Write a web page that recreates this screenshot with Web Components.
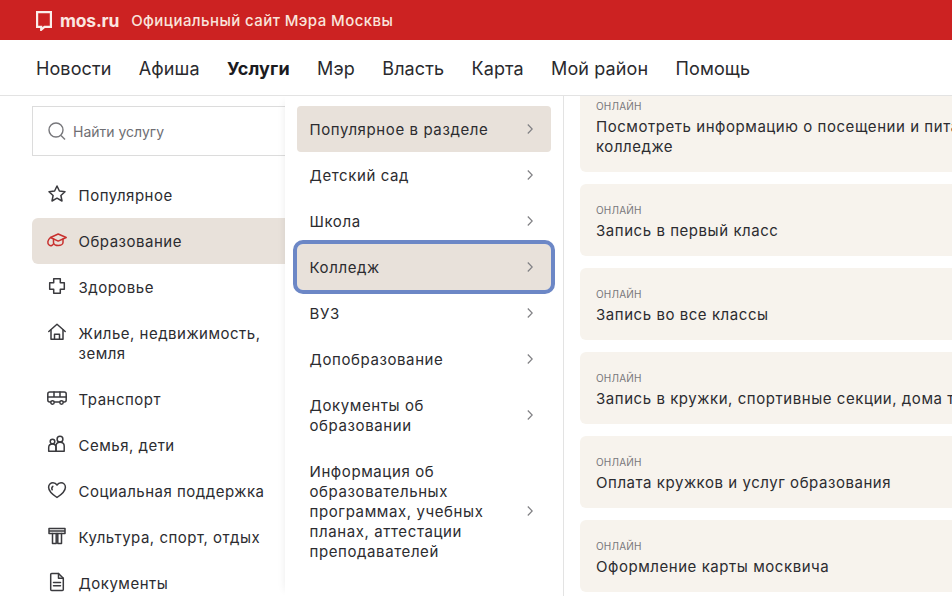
<!DOCTYPE html>
<html lang="ru">
<head>
<meta charset="utf-8">
<title>mos.ru</title>
<style>
  html, body { margin: 0; height: 596px; overflow: hidden; background: #fff; }
  body { font-family: "Inter", "Liberation Sans", sans-serif; color: #26262a; }
  .page { display: flex; height: 500px; overflow: hidden; }
</style>
</head>
<body>
<mos-header></mos-header>
<mos-nav></mos-nav>
<div class="page">
  <side-menu>
    <side-item icon="star">Популярное</side-item>
    <side-item icon="cap" active>Образование</side-item>
    <side-item icon="cross">Здоровье</side-item>
    <side-item icon="home">Жилье, недвижимость, земля</side-item>
    <side-item icon="bus">Транспорт</side-item>
    <side-item icon="family">Семья, дети</side-item>
    <side-item icon="heart">Социальная поддержка</side-item>
    <side-item icon="column">Культура, спорт, отдых</side-item>
    <side-item icon="doc">Документы</side-item>
  </side-menu>
  <sub-menu>
    <sub-item active>Популярное в разделе</sub-item>
    <sub-item>Детский сад</sub-item>
    <sub-item>Школа</sub-item>
    <sub-item active focused>Колледж</sub-item>
    <sub-item>ВУЗ</sub-item>
    <sub-item>Допобразование</sub-item>
    <sub-item>Документы об образовании</sub-item>
    <sub-item>Информация об образовательных программах, учебных планах, аттестации преподавателей</sub-item>
  </sub-menu>
  <service-list>
    <service-card>Посмотреть информацию о посещении и питании в колледже</service-card>
    <service-card>Запись в первый класс</service-card>
    <service-card>Запись во все классы</service-card>
    <service-card>Запись в кружки, спортивные секции, дома творчества</service-card>
    <service-card>Оплата кружков и услуг образования</service-card>
    <service-card>Оформление карты москвича</service-card>
  </service-list>
</div>
<script>
// all icons sit in a 20x20 box
const ICONS = {
  star: '<path d="M10 2l2.400 5 5.600.7-4.100 3.800 1.100 5.500-5-2.800-5 2.800 1.100-5.500L2 7.700 7.600 7z"/>',
  cap: '<path d="M3.500 7.500L11.200 4l8 3.500-8 3.600z"/><path d="M6.500 9v3.600c0 1.700 2.300 3 4.800 3s4.700-1.300 4.700-3V9"/><path d="M3.500 7.500C.6 9.800-.2 13.600 2.300 15.200c1.700 1 3.500.2 4.200-1.400"/>',
  cross: '<path d="M6.700 2.700h6.600v4h4v6.600h-4v4H6.700v-4h-4V6.700h4z"/>',
  home: '<path d="M1.800 9.500L10 2.300l8.200 7.200"/><path d="M4 8v9.300h12V8"/><path d="M7.500 17.300v-5h5v5"/>',
  bus: '<rect x=".8" y="4" width="18.400" height="10" rx="2"/><path d="M.8 9h18.400M7 4v5M13 4v5"/><circle cx="5.500" cy="14.500" r="1.700" fill="#fff"/><circle cx="14.500" cy="14.500" r="1.700" fill="#fff"/>',
  family: '<circle cx="5.500" cy="7.500" r="2.300"/><circle cx="13" cy="5.200" r="2.900"/><path d="M1.700 17.200v-3.700c0-2 1.600-3.500 3.800-3.500s3.500 1.500 3.500 3.500v3.700z"/><path d="M9 17.200V12c0-2.300 1.700-3.800 4-3.800s4.200 1.500 4.200 3.800v5.200z"/>',
  heart: '<path d="M10 17.500C5.500 14.500 1.600 11.500 1.600 7.200 1.600 4.600 3.600 2.800 6 2.800c1.700 0 3.100.8 4 2.200.9-1.400 2.300-2.200 4-2.200 2.400 0 4.400 1.800 4.400 4.400 0 4.300-3.900 7.300-8.400 10.300z"/><path d="M5.200 9.800c-.7-1.400-.4-2.700.6-3.500"/>',
  column: '<path d="M2 2.500h16M2 2.500v5h16v-5M2 5h16"/><path d="M5.500 7.500v10h3.700v-10M10.800 7.500v10h3.700v-10"/>',
  doc: '<path d="M3.700 2.500a1 1 0 0 1 1-1h6.800l4.800 4.800V17.500a1 1 0 0 1-1 1H4.700a1 1 0 0 1-1-1z"/><path d="M11.500 1.500v4.800h4.800M6.500 10.500h7M6.500 13.800h7"/>'
};

class MosHeader extends HTMLElement {
  constructor() {
    super();
    this.attachShadow({ mode: 'open' }).innerHTML = `
      <style>
        :host { display: flex; align-items: center; height: 40px; padding-left: 36px; background: #cc2222; color: #fbeeea; }
        svg { width: 16px; height: 20px; margin: 2px 8px 0 0; fill: none; stroke: #fbeeea; stroke-width: 2.200; }
        .logo { font-weight: 700; font-size: 17.500px; letter-spacing: -.2px; color: #fbe6e0; margin-right: 12px; }
        .title { font-weight: 500; font-size: 15px; letter-spacing: .42px; color: #f9e4db; }
      </style>
      <svg viewBox="0 0 16 20"><path d="M1.100 1.100h13.800v14.800H8.500L5.200 18.800v-2.900H1.100z"/></svg>
      <span class="logo">mos.ru</span>
      <span class="title">Официальный сайт Мэра Москвы</span>`;
  }
}

class MosNav extends HTMLElement {
  constructor() {
    super();
    const items = ['Новости', 'Афиша', 'Услуги', 'Мэр', 'Власть', 'Карта', 'Мой район', 'Помощь'];
    this.attachShadow({ mode: 'open' }).innerHTML = `
      <style>
        :host { display: flex; align-items: center; gap: 27.400px; height: 54px; padding: 1px 0 0 36px; border-bottom: 1px solid #e3e3e3; font-size: 18px; letter-spacing: .1px; color: #2a2a2e; }
        b { font-weight: 700; color: #1b1b1f; }
      </style>
      ${items.map(t => t === 'Услуги' ? `<b>${t}</b>` : `<span>${t}</span>`).join('')}`;
  }
}

class SideMenu extends HTMLElement {
  constructor() {
    super();
    this.attachShadow({ mode: 'open' }).innerHTML = `
      <style>
        :host { display: block; flex: none; width: 253px; margin-left: 32px; padding-top: 10px; }
        .search { display: flex; align-items: center; gap: 5px; height: 48px; margin-bottom: 16px; padding-left: 13px; border: 1px solid #dcdcdc; border-right: 0; color: #6e6e73; font-size: 14px; }
        svg { width: 22px; height: 22px; fill: none; stroke: #77777b; stroke-width: 1.400; }
      </style>
      <div class="search">
        <svg viewBox="0 0 22 22"><circle cx="10" cy="10" r="7"/><path d="M15 15.500l4 4"/></svg>
        <span>Найти услугу</span>
      </div>
      <slot></slot>`;
  }
}

class SideItem extends HTMLElement {
  constructor() {
    super();
    const active = this.hasAttribute('active');
    this.attachShadow({ mode: 'open' }).innerHTML = `
      <style>
        :host { display: flex; padding: 14px 15px 12px 15px; font-size: 15px; letter-spacing: .5px; line-height: 20px; color: #2c2c30; border-radius: 6px 0 0 6px; }
        :host([active]) { background: #e8e1da; }
        svg { flex: none; width: 20px; height: 20px; margin: -2px 11.500px 0 0; overflow: visible; fill: none; stroke: ${active ? '#c8302e' : '#3a3a3e'}; stroke-width: 1.500; stroke-linejoin: round; stroke-linecap: round; }
      </style>
      <svg viewBox="0 0 20 20">${ICONS[this.getAttribute('icon')]}</svg>
      <span><slot></slot></span>`;
  }
}

class SubMenu extends HTMLElement {
  constructor() {
    super();
    this.attachShadow({ mode: 'open' }).innerHTML = `
      <style>
        :host { display: block; flex: none; width: 254px; height: 490px; padding: 10px 12px 0; border-right: 1px solid #e3e3e3; box-shadow: -6px 0 8px -6px rgba(0,0,0,.08); }
      </style>
      <slot></slot>`;
  }
}

class SubItem extends HTMLElement {
  constructor() {
    super();
    this.attachShadow({ mode: 'open' }).innerHTML = `
      <style>
        :host { display: flex; align-items: center; justify-content: space-between; padding: 14px 18px 12px 12.500px; font-size: 15px; letter-spacing: .6px; line-height: 20px; color: #2c2c30; border-radius: 4px; }
        :host([active]) { background: #e8e1da; }
        :host([focused]) { outline: 4px solid #6c87c6; border-radius: 6px; }
        span { max-width: 190px; }
        svg { flex: none; width: 6px; height: 10px; margin-top: -3px; fill: none; stroke: #808084; stroke-width: 1.200; }
      </style>
      <span><slot></slot></span>
      <svg viewBox="0 0 6 10"><path d="M.8.500l4.400 4.500-4.400 4.500"/></svg>`;
  }
}

class ServiceList extends HTMLElement {
  constructor() {
    super();
    this.attachShadow({ mode: 'open' }).innerHTML = `
      <style>
        :host { display: flex; flex-direction: column; gap: 12px; flex: 1; min-width: 0; margin: -16px 0 0 16px; overflow: hidden; }
      </style>
      <slot></slot>`;
  }
}

class ServiceCard extends HTMLElement {
  constructor() {
    super();
    this.attachShadow({ mode: 'open' }).innerHTML = `
      <style>
        :host { display: block; flex: none; width: 492px; box-sizing: border-box; padding: 20px 16px 15px; background: #f7f3ed; border-radius: 6px; font-size: 15px; letter-spacing: .55px; line-height: 20px; color: #2c2c30; }
        small { display: block; margin-bottom: 5px; font-size: 10px; letter-spacing: .2px; line-height: 12px; color: #77777b; }
      </style>
      <small>ОНЛАЙН</small>
      <slot></slot>`;
  }
}

customElements.define('mos-header', MosHeader);
customElements.define('mos-nav', MosNav);
customElements.define('side-menu', SideMenu);
customElements.define('side-item', SideItem);
customElements.define('sub-menu', SubMenu);
customElements.define('sub-item', SubItem);
customElements.define('service-list', ServiceList);
customElements.define('service-card', ServiceCard);
</script>
</body>
</html>
